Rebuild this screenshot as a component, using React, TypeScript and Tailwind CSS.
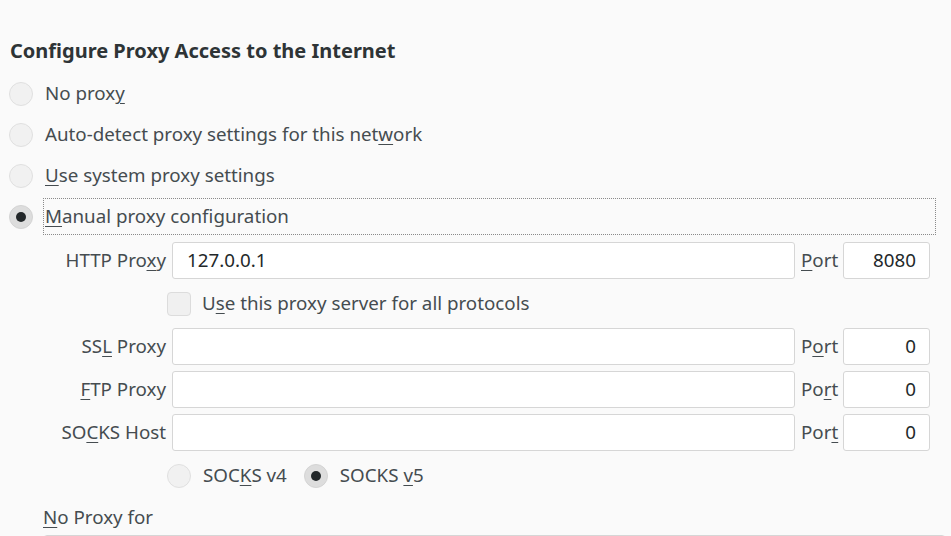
import React from "react";

const font = { fontFamily: '"Noto Sans", "Open Sans", sans-serif' };

function U({ children }: { children: React.ReactNode }) {
  return <span className="underline decoration-1 underline-offset-[3px]">{children}</span>;
}

function Radio({ checked = false }: { checked?: boolean }) {
  return (
    <span
      className={
        "flex h-[24px] w-[24px] shrink-0 items-center justify-center rounded-full border " +
        (checked ? "border-[#d4d4d4] bg-[#dddddd]" : "border-[#e0e0e0] bg-[#f1f1f1]")
      }
    >
      {checked && <span className="h-[10px] w-[10px] rounded-full bg-[#222729]" />}
    </span>
  );
}

function Input({ value = "", right = false }: { value?: string; right?: boolean }) {
  return (
    <div
      className={
        "flex h-[37px] items-center rounded-[3px] border border-[#d6d6d6] bg-white text-[18.75px] text-[#23282a] " +
        (right ? "justify-end pr-[13px]" : "pl-[14px]")
      }
    >
      <span>{value}</span>
    </div>
  );
}

function Label({ children }: { children: React.ReactNode }) {
  return (
    <div className="flex h-[37px] items-center justify-end whitespace-nowrap text-[18.75px] text-[#454c50]">
      <span>{children}</span>
    </div>
  );
}

function PortLabel({ children }: { children: React.ReactNode }) {
  return (
    <div className="flex h-[37px] items-center text-[18.75px] text-[#454c50]">
      <span>{children}</span>
    </div>
  );
}

export default function App() {
  return (
    <div className="h-[536px] w-[951px] overflow-hidden bg-[#fafafa]" style={font}>
      <div className="flex flex-col">
        <div className="mt-[36px] flex h-[30px] items-center whitespace-nowrap pl-[10px] text-[20px] font-bold text-[#2e3436]">
          <span>Configure Proxy Access to the Internet</span>
        </div>
        <div className="mt-[9px] flex flex-col gap-[4px] whitespace-nowrap pl-[9px] pr-[15px] text-[18.75px] text-[#454c50]">
          <div className="flex h-[37px] items-center gap-[12px]">
            <Radio />
            <span>
              No prox<U>y</U>
            </span>
          </div>
          <div className="flex h-[37px] items-center gap-[12px]">
            <Radio />
            <span>
              Auto-detect proxy settings for this net<U>w</U>ork
            </span>
          </div>
          <div className="flex h-[37px] items-center gap-[12px]">
            <Radio />
            <span>
              <U>U</U>se system proxy settings
            </span>
          </div>
          <div className="flex h-[37px] items-center gap-[10px]">
            <Radio checked />
            <span className="flex h-[37px] flex-1 items-center border border-dotted border-[#8a8a8a] pl-[1px]">
              <span>
                <U>M</U>anual proxy configuration
              </span>
            </span>
          </div>
        </div>
        <div className="mt-[7px] grid grid-cols-[123px_623px_36px_87px] gap-x-[6px] gap-y-[6px] pl-[43px]">
          <Label>
            HTTP Pro<U>x</U>y
          </Label>
          <Input value="127.0.0.1" />
          <PortLabel>
            <U>P</U>ort
          </PortLabel>
          <Input value="8080" right />

          <div />
          <div className="col-span-3 -ml-[5px] flex h-[37px] items-center gap-[11px] whitespace-nowrap text-[18.75px] text-[#454c50]">
            <span className="h-[24px] w-[24px] rounded-[4px] border border-[#dcdcdc] bg-[#f0f0f0]" />
            <span>
              U<U>s</U>e this proxy server for all protocols
            </span>
          </div>

          <Label>
            SS<U>L</U> Proxy
          </Label>
          <Input />
          <PortLabel>
            P<U>o</U>rt
          </PortLabel>
          <Input value="0" right />

          <Label>
            <U>F</U>TP Proxy
          </Label>
          <Input />
          <PortLabel>
            Po<U>r</U>t
          </PortLabel>
          <Input value="0" right />

          <Label>
            SO<U>C</U>KS Host
          </Label>
          <Input />
          <PortLabel>
            Por<U>t</U>
          </PortLabel>
          <Input value="0" right />

          <div />
          <div className="col-span-3 -ml-[5px] flex h-[37px] items-center whitespace-nowrap text-[18.75px] text-[#454c50]">
            <Radio />
            <span className="ml-[12px]">
              SOC<U>K</U>S v4
            </span>
            <span className="ml-[17px]">
              <Radio checked />
            </span>
            <span className="ml-[12px]">
              SOCKS <U>v</U>5
            </span>
          </div>
        </div>
        <div className="mt-[6px] flex h-[35px] items-center whitespace-nowrap pl-[43px] text-[18.75px] text-[#454c50]">
          <span>
            <U>N</U>o Proxy for
          </span>
        </div>
        <div className="ml-[43px] mr-[5px] h-[80px] shrink-0 rounded-[4px] border border-[#d6d6d6] bg-white" />
      </div>
    </div>
  );
}
